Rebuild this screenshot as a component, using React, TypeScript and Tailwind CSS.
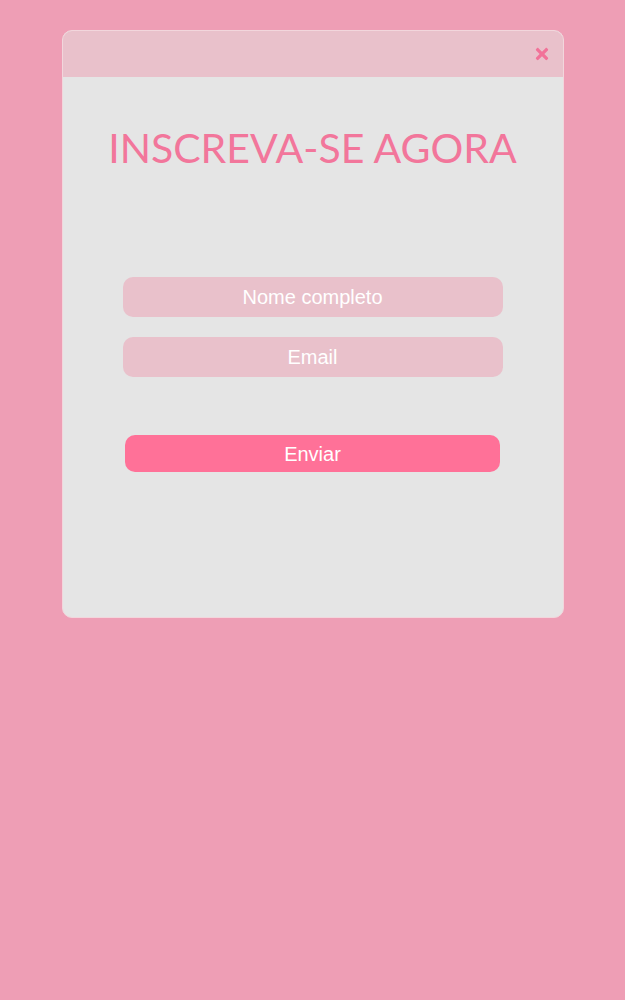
import { FaTimes } from "react-icons/fa";

function App() {
  return (
    <div className="min-h-screen bg-[#ee9eb5] pt-[30px]">
      <div className="mx-auto w-[502px] h-[588px] rounded-[10px] border border-[#f2d6dc] bg-[#e5e5e5] overflow-hidden">
        {/* header */}
        <div className="h-[46px] bg-[#e9c1cb] flex justify-end items-center pr-[12px]">
          <FaTimes className="text-[#f27299] text-[18px]" />
        </div>

        <h1 className="mt-[46px] text-center text-[41px] leading-[50px] text-[#f2769b] font-['Lato',sans-serif]">
          INSCREVA-SE AGORA
        </h1>

        <form className="flex flex-col items-center mt-[104px] font-['Liberation_Sans',Arial,sans-serif]">
          <input
            placeholder="Nome completo"
            className="w-[380px] h-[40px] rounded-[10px] bg-[#e9c1cb] text-center text-[20px] text-white placeholder:text-white outline-none"
          />
          <input
            placeholder="Email"
            className="mt-[20px] w-[380px] h-[40px] rounded-[10px] bg-[#e9c1cb] text-center text-[20px] text-white placeholder:text-white outline-none"
          />
          <button
            type="button"
            className="mt-[58px] w-[375px] h-[37px] rounded-[10px] bg-[#ff7198] text-[20px] text-white"
          >
            Enviar
          </button>
        </form>
      </div>
    </div>
  );
}

export default App;
